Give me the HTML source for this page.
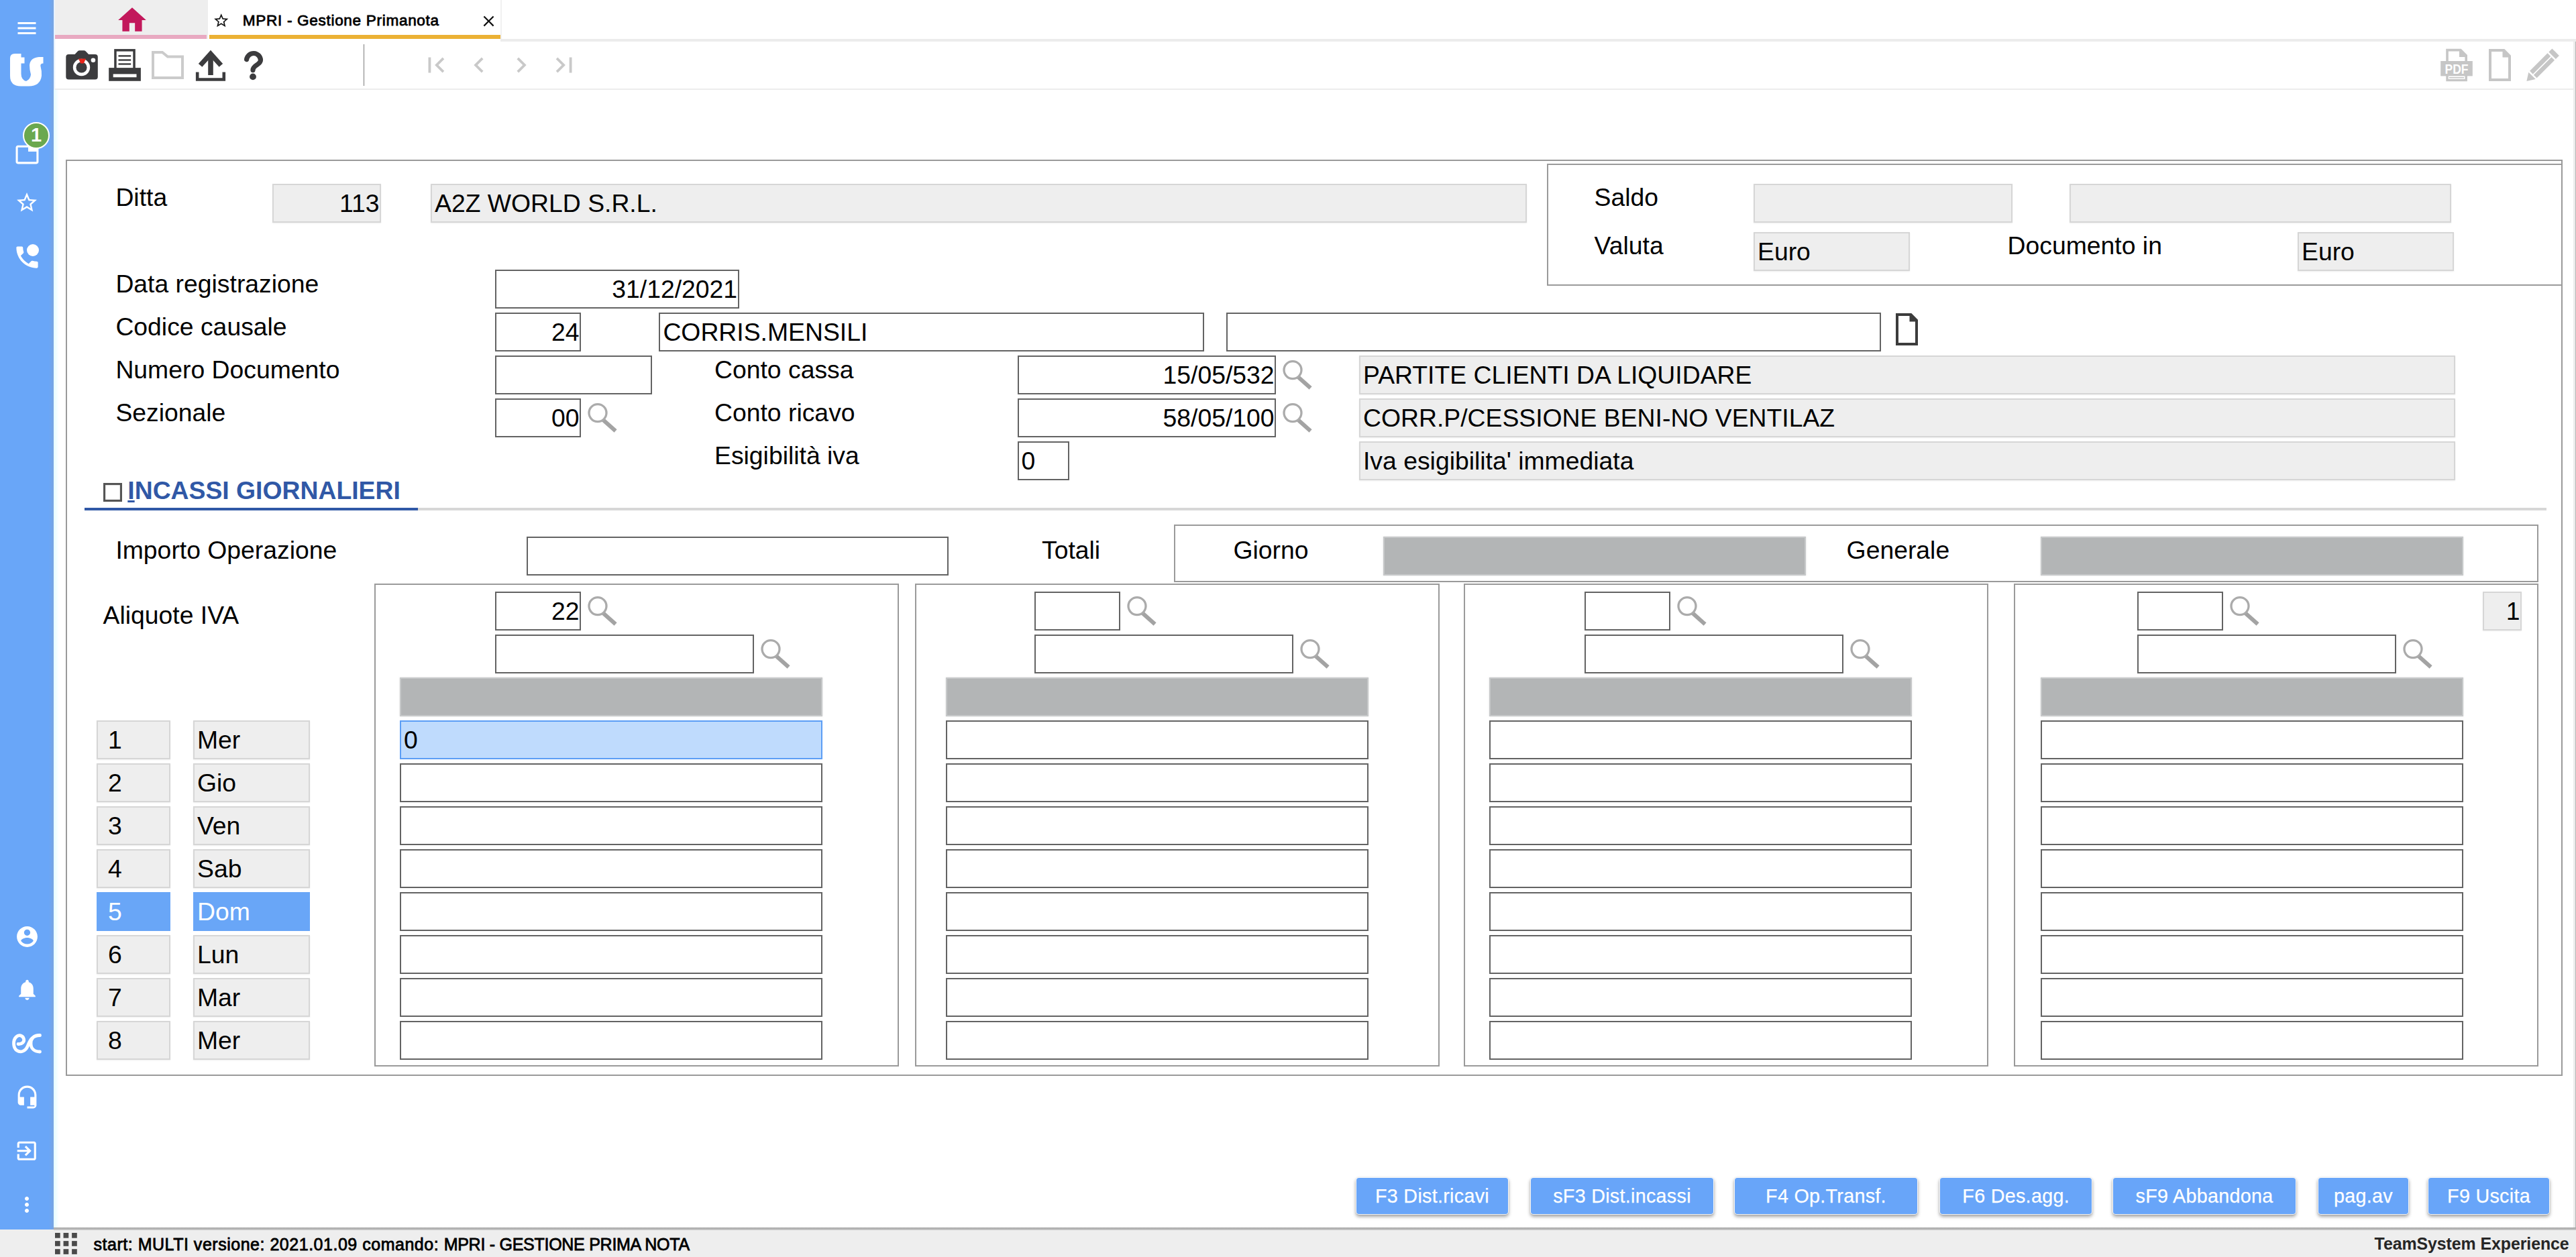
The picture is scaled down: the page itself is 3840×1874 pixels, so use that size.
<!DOCTYPE html><html><head><meta charset="utf-8"><title>MPRI - Gestione Primanota</title><style>
*{box-sizing:border-box;margin:0;padding:0}
html,body{width:3840px;height:1874px;overflow:hidden;background:#fff}
body{position:relative;font-family:"Liberation Sans",sans-serif;color:#000;font-size:37.35px}
.a{position:absolute}
.lb{position:absolute;white-space:nowrap;line-height:42px;height:42px;font-size:37.35px}
.in{position:absolute;background:#fff;border:2px solid #636363;white-space:nowrap;overflow:hidden;font-size:37.35px;padding:0 0.4px 0 4px}
.ro{position:absolute;background:#eee;border:2px solid #d6d6d6;box-shadow:0 1px 2px rgba(0,0,0,.07);white-space:nowrap;overflow:hidden;font-size:37.35px;padding:0 0.4px 0 4px}
.gr{position:absolute;background:#b3b5b6;border:2px solid #c6c8c9;box-shadow:0 0 2px rgba(179,181,182,.5)}
.r{text-align:right}
.bx{position:absolute;border:2px solid #9a9a9a;background:transparent}
.btn{position:absolute;background:#68a5f9;color:#fff;font-size:28.7px;letter-spacing:0.3px;text-align:center;border-radius:4px;white-space:nowrap;-webkit-text-stroke:0.25px #fff;box-shadow:0 0 0 1px rgba(255,255,255,.85),0 3px 5px 1px rgba(0,0,0,.36),0 0 3px rgba(0,0,0,.15)}
.sel{background:#69a6f7;border-color:#69a6f7;color:#fff;box-shadow:none}
svg{position:absolute;overflow:visible}
</style></head><body>
<div class="a" style="left:80px;top:134px;width:8px;height:1697px;background:linear-gradient(to right,#e4fcff,#fff)"></div>
<div class="a" style="left:80px;top:0;width:3px;height:134px;background:linear-gradient(to right,#d8eaff,#fff)"></div>
<div class="a" style="left:0;top:0;width:80px;height:1834px;background:linear-gradient(to right,#69a6f8 0,#69a6f8 73px,#79a5e0 80px)"></div>
<svg style="left:22.0px;top:24.0px" width="36" height="36" viewBox="0 0 24 24"><path fill="#fff" d="M3 18h18v-2H3v2zm0-5h18v-2H3v2zm0-7v2h18V6H3z"/></svg>
<svg style="left:0;top:0" width="80" height="140" viewBox="0 0 80 140"><path fill="#fff" d="M15 87 Q15 80 22 80 L31.5 80 L31.5 85.5 L36.5 85.5 L36.5 94.5 L31.5 94.5 L31.5 110 Q31.5 119 39 121 Q45.5 118 46 111 Q44 104 44 97 Q45 86 58 85 L64.5 85 L64.5 94.5 Q59.5 94.5 60.5 99 Q62.5 106 62 113 Q60 128.5 43 128.5 L31 128.5 Q15 128.5 15 113 Z"/></svg>
<svg style="left:21.5px;top:211.5px" width="37" height="37" viewBox="0 0 24 24"><path fill="#fff" d="M21 3H3c-1.1 0-2 .9-2 2v14c0 1.1.9 2 2 2h18c1.1 0 2-.9 2-2V5c0-1.1-.9-2-2-2zm0 16H3V5h10v4h8v10z"/></svg>
<div class="a" style="left:34px;top:182px;width:40px;height:40px;border-radius:50%;background:#6aa84f;border:2.5px solid #fff;color:#fff;font-weight:bold;font-size:29px;line-height:35px;text-align:center">1</div>
<svg style="left:22.0px;top:284.4px" width="36" height="36" viewBox="0 0 24 24"><path fill="#fff" d="M22 9.24l-7.19-.62L12 2 9.19 8.63 2 9.24l5.46 4.73L5.82 21 12 17.27 18.18 21l-1.63-7.03L22 9.24zM12 15.4l-3.76 2.27 1-4.28-3.32-2.88 4.38-.38L12 6.1l1.71 4.04 4.38.38-3.32 2.88 1 4.28L12 15.4z"/></svg>
<svg style="left:18.6px;top:362.1px" width="43" height="43" viewBox="0 0 24 24"><path fill="#fff" d="M6.62 10.79c1.44 2.83 3.76 5.14 6.59 6.59l2.2-2.2c.27-.27.67-.36 1.02-.24 1.12.37 2.33.57 3.57.57.55 0 1 .45 1 1V20c0 .55-.45 1-1 1-9.39 0-17-7.61-17-17 0-.55.45-1 1-1h3.5c.55 0 1 .45 1 1 0 1.25.2 2.45.57 3.57.11.35.03.74-.25 1.02l-2.2 2.2z"/></svg>
<div class="a" style="left:39.8px;top:363.8px;width:18.4px;height:18.4px;border-radius:50%;background:#fff"></div>
<svg style="left:21.5px;top:1377.5px" width="37" height="37" viewBox="0 0 24 24"><path fill="#fff" d="M12 2C6.48 2 2 6.48 2 12s4.48 10 10 10 10-4.48 10-10S17.52 2 12 2zm0 3c1.66 0 3 1.34 3 3s-1.34 3-3 3-3-1.34-3-3 1.34-3 3-3zm0 14.2c-2.5 0-4.71-1.28-6-3.22.03-1.99 4-3.08 6-3.08 1.99 0 5.97 1.09 6 3.08-1.29 1.94-3.5 3.22-6 3.22z"/></svg>
<svg style="left:21.5px;top:1457.4px" width="37" height="37" viewBox="0 0 24 24"><path fill="#fff" d="M12 22c1.1 0 2-.9 2-2h-4c0 1.1.89 2 2 2zm6-6v-5c0-3.07-1.64-5.64-4.5-6.32V4c0-.83-.67-1.5-1.5-1.5s-1.5.67-1.5 1.5v.68C7.63 5.36 6 7.92 6 11v5l-2 2v1h16v-1l-2-2z"/></svg>
<svg style="left:0;top:1520px" width="80" height="70" viewBox="0 1520 80 70"><path fill="none" stroke="#fff" stroke-width="4.8" stroke-linecap="round" d="M27 1556.5 C33 1557 36.5 1553 35.5 1549 C34 1543.5 28 1542 24 1546 C19 1551 19.5 1562 25 1566 C31 1570 38 1567 41 1560 C44 1553 47 1543.5 59.5 1543.5 M59.5 1543.5 C50 1543 46 1549 46 1555.5 C46 1563 51 1568 59.5 1568"/></svg>
<svg style="left:21.5px;top:1617.4px" width="37" height="37" viewBox="0 0 24 24"><path fill="#fff" d="M12 1c-4.97 0-9 4.03-9 9v7c0 1.66 1.34 3 3 3h3v-8H5v-2c0-3.87 3.13-7 7-7s7 3.13 7 7v2h-4v8h4v1h-7v2h6c1.66 0 3-1.34 3-3V10c0-4.97-4.03-9-9-9z"/></svg>
<svg style="left:21.2px;top:1697.2px" width="37.5" height="37.5" viewBox="0 0 24 24"><path fill="#fff" d="M10.09 15.59L11.5 17l5-5-5-5-1.41 1.41L12.67 11H3v2h9.67l-2.58 2.59zM19 3H5c-1.11 0-2 .9-2 2v4h2V5h14v14H5v-4H3v4c0 1.1.89 2 2 2h14c1.1 0 2-.9 2-2V5c0-1.1-.9-2-2-2z"/></svg>
<svg style="left:22.0px;top:1778.2px" width="36" height="36" viewBox="0 0 24 24"><path fill="#fff" d="M12 8c1.1 0 2-.9 2-2s-.9-2-2-2-2 .9-2 2 .9 2 2 2zm0 2c-1.1 0-2 .9-2 2s.9 2 2 2 2-.9 2-2-.9-2-2-2zm0 6c-1.1 0-2 .9-2 2s.9 2 2 2 2-.9 2-2-.9-2-2-2z"/></svg>
<div class="a" style="left:82px;top:0;width:228px;height:58px;background:#eee"></div>
<div class="a" style="left:82px;top:52px;width:226px;height:6px;background:#e8a9c1"></div>
<svg style="left:171.6px;top:4.7px" width="50" height="50" viewBox="0 0 24 24"><path fill="#c2185b" d="M10 20v-6h4v6h5v-8h3L12 3 2 12h3v8z"/></svg>
<div class="a" style="left:746px;top:58px;width:3094px;height:4px;background:#ececec"></div>
<div class="a" style="left:746px;top:0;width:2px;height:58px;background:#f1f1f1"></div>
<div class="a" style="left:312px;top:52px;width:434px;height:6px;background:#ebb134"></div>
<svg style="left:317.3px;top:17.6px" width="25.5" height="25.5" viewBox="0 0 24 24"><path fill="#111" d="M22 9.24l-7.19-.62L12 2 9.19 8.63 2 9.24l5.46 4.73L5.82 21 12 17.27 18.18 21l-1.63-7.03L22 9.24zM12 15.4l-3.76 2.27 1-4.28-3.32-2.88 4.38-.38L12 6.1l1.71 4.04 4.38.38-3.32 2.88 1 4.28L12 15.4z"/></svg>
<div class="a" style="left:361.8px;top:12.9px;font-size:22.6px;line-height:36px;white-space:nowrap;letter-spacing:0.67px;color:#000;-webkit-text-stroke:0.8px #000">MPRI - Gestione Primanota</div>
<svg style="left:715.0px;top:18.0px" width="27" height="27" viewBox="0 0 24 24"><path fill="#111" d="M19 6.41L17.59 5 12 10.59 6.41 5 5 6.41 10.59 12 5 17.59 6.41 19 12 13.41 17.59 19 19 17.59 13.41 12z"/></svg>
<div class="a" style="left:82px;top:132px;width:3758px;height:2px;background:#ececec"></div>
<div class="a" style="left:3836px;top:62px;width:3px;height:1770px;background:#ececec"></div>
<div class="a" style="left:3838.5px;top:62px;width:1.5px;height:1770px;background:#b5b5b5"></div>
<div class="a" style="left:542px;top:66px;width:1px;height:62px;background:#7c7c7c"></div>
<svg style="left:98px;top:74px" width="48" height="45" viewBox="0 0 48 45"><path fill="#3c3c3e" d="M4.3 7.1 H13.5 L18 2.3 Q19 1.3 20.5 1.3 H27.1 Q28.6 1.3 29.6 2.3 L34.1 7.1 H43.8 Q47.8 7.1 47.8 11.1 V40.5 Q47.8 44.5 43.8 44.5 H4.3 Q0.3 44.5 0.3 40.5 V11.1 Q0.3 7.1 4.3 7.1 Z"/><circle cx="23.5" cy="26.5" r="10.4" fill="none" stroke="#fff" stroke-width="4.6"/><path d="M19 13.4 L30 13.4 L26.8 20.6 L22.2 20.6 Z" fill="#e8261b"/><circle cx="40.9" cy="15.7" r="3.3" fill="#fff"/></svg>
<svg style="left:162px;top:73px" width="48" height="48" viewBox="0 0 48 48"><rect x="0.2" y="28.1" width="47.7" height="19.7" fill="#3c3c3e"/><rect x="9.95" y="1.85" width="28.1" height="28" fill="#fff" stroke="#3c3c3e" stroke-width="3.5"/><rect x="14.5" y="9.2" width="18.7" height="2.4" fill="#3c3c3e"/><rect x="14.5" y="15.3" width="18.7" height="2.4" fill="#3c3c3e"/><rect x="14.5" y="21.3" width="18.7" height="2.4" fill="#3c3c3e"/><rect x="6.7" y="37.4" width="34.8" height="4.8" fill="#fff"/></svg>
<svg style="left:226px;top:76px" width="48" height="42" viewBox="0 0 48 42"><path fill="none" stroke="#cbcbcb" stroke-width="4" stroke-linejoin="miter" d="M2 2 H16 L24 8.5 H46 V40 H2 Z"/></svg>
<svg style="left:291px;top:74px" width="46" height="47" viewBox="0 0 46 47"><path fill="none" stroke="#3c3c3e" stroke-width="4.6" d="M3.2 33.5 V44.5 H42.8 V33.5"/><path fill="none" stroke="#3c3c3e" stroke-width="7.6" d="M23 38 V6"/><path fill="none" stroke="#3c3c3e" stroke-width="7.4" stroke-linejoin="miter" d="M7.6 23.4 L23 6.2 L38.4 23.4"/></svg>
<svg style="left:361px;top:72px" width="34" height="50" viewBox="0 0 34 50"><path fill="none" stroke="#3c3c3e" stroke-width="7.2" stroke-linecap="round" d="M6.6 16.6 A10.5 10.5 0 0 1 27.5 17.6 C27.5 25 16 24.5 16 32.6"/><circle cx="16" cy="42.4" r="4.9" fill="#3c3c3e"/></svg>
<svg style="left:626.5px;top:73.9px" width="46" height="46" viewBox="0 0 24 24"><path fill="#c9c9c9" d="M18.41 16.59L13.82 12l4.59-4.59L17 6l-6 6 6 6zM6 6h2v12H6z"/></svg>
<svg style="left:691.2px;top:73.9px" width="46" height="46" viewBox="0 0 24 24"><path fill="#c9c9c9" d="M15.41 7.41L14 6l-6 6 6 6 1.41-1.41L10.83 12z"/></svg>
<svg style="left:754.4px;top:73.9px" width="46" height="46" viewBox="0 0 24 24"><path fill="#c9c9c9" d="M10 6L8.59 7.41 13.17 12l-4.58 4.59L10 18l6-6z"/></svg>
<svg style="left:818.1px;top:73.9px" width="46" height="46" viewBox="0 0 24 24"><path fill="#c9c9c9" d="M5.59 7.41L10.18 12l-4.59 4.59L7 18l6-6-6-6zM16 6h2v12h-2z"/></svg>
<svg style="left:3638px;top:72px" width="48" height="50" viewBox="0 0 48 50"><path fill="none" stroke="#c6c6c6" stroke-width="3.6" d="M10 20 V2.6 H30 L38.2 10.8 V20"/><path fill="#c6c6c6" d="M28 2 L39 13 H28 Z"/><rect x="0.2" y="19" width="47.6" height="22.4" fill="#c6c6c6"/><path fill="none" stroke="#c6c6c6" stroke-width="3.4" d="M10 41 V47.6 H38.2 V41"/><rect x="13" y="43" width="22" height="1.6" fill="#c6c6c6"/><text x="24" y="38.2" font-family="Liberation Sans" font-weight="bold" font-size="19.5" text-anchor="middle" fill="#fff" textLength="35" lengthAdjust="spacingAndGlyphs">PDF</text></svg>
<svg style="left:3709.6px;top:72.9px" width="33" height="48" viewBox="0 0 33 48"><path fill="none" stroke="#c6c6c6" stroke-width="4" stroke-linejoin="miter" d="M2 2 H22.5 L31 10.5 V46 H2 Z"/><path fill="#c6c6c6" d="M20.5 1 L32 12.5 H20.5 Z"/></svg>
<svg style="left:3765px;top:72px" width="50" height="50" viewBox="0 0 50 50"><g transform="translate(1.4,49.0) rotate(-45)" fill="#c6c6c6"><path d="M0 0 L11.5 -7.4 V7.4 Z"/><rect x="14" y="-7.4" width="37.5" height="6.6"/><rect x="14" y="0.8" width="37.5" height="6.6"/><rect x="54" y="-7.4" width="7.2" height="14.8"/></g></svg>
<div class="bx" style="left:98px;top:238px;width:3722px;height:1366px"></div>
<div class="bx" style="left:2306px;top:244px;width:1514px;height:182px"></div>
<div class="lb" style="left:172.4px;top:273.1px;">Ditta</div>
<div class="ro r" style="left:406.0px;top:274.0px;width:162.0px;height:58.0px;line-height:54.0px;">113</div>
<div class="ro" style="left:642.0px;top:274.0px;width:1633.5px;height:58.0px;line-height:54.0px;">A2Z WORLD S.R.L.</div>
<div class="lb" style="left:2376.6px;top:273.1px;">Saldo</div>
<div class="ro" style="left:2614.0px;top:274.0px;width:385.5px;height:58.0px;line-height:54.0px;"></div>
<div class="ro" style="left:3085.0px;top:274.0px;width:568.5px;height:58.0px;line-height:54.0px;"></div>
<div class="lb" style="left:2376.6px;top:345.3px;">Valuta</div>
<div class="ro" style="left:2614.0px;top:346.0px;width:233.0px;height:58.0px;line-height:54.0px;">Euro</div>
<div class="lb" style="left:2992.6px;top:345.3px;">Documento in</div>
<div class="ro" style="left:3425.0px;top:346.0px;width:232.5px;height:58.0px;line-height:54.0px;">Euro</div>
<div class="lb" style="left:172.4px;top:401.7px;">Data registrazione</div>
<div class="lb" style="left:172.4px;top:465.7px;">Codice causale</div>
<div class="lb" style="left:172.4px;top:529.7px;">Numero Documento</div>
<div class="lb" style="left:172.4px;top:593.7px;">Sezionale</div>
<div class="in r" style="left:738.0px;top:402.0px;width:363.5px;height:58.0px;line-height:54.0px;">31/12/2021</div>
<div class="in r" style="left:738.0px;top:466.0px;width:128.0px;height:58.0px;line-height:54.0px;">24</div>
<div class="in" style="left:982.4px;top:466.0px;width:813.1px;height:58.0px;line-height:54.0px;">CORRIS.MENSILI</div>
<div class="in" style="left:1828.4px;top:466.0px;width:975.6px;height:58.0px;line-height:54.0px;"></div>
<svg style="left:2825.6px;top:467.0px" width="33" height="48" viewBox="0 0 33 48"><path fill="none" stroke="#3c3c3c" stroke-width="4" stroke-linejoin="miter" d="M2 2 H22.5 L31 10.5 V46 H2 Z"/><path fill="#3c3c3c" d="M20.5 1 L32 12.5 H20.5 Z"/></svg>
<div class="in" style="left:738.0px;top:530.0px;width:233.8px;height:58.0px;line-height:54.0px;"></div>
<div class="in r" style="left:738.0px;top:594.0px;width:128.0px;height:58.0px;line-height:54.0px;">00</div>
<svg style="left:875.8px;top:601.0px" width="46" height="45" viewBox="0 0 46 45"><line x1="22.5" y1="24.5" x2="41.6" y2="41.6" stroke="#a3a3a3" stroke-width="6"/><circle cx="15" cy="14.6" r="13" fill="none" stroke="#ababab" stroke-width="3.3"/></svg>
<div class="lb" style="left:1065.0px;top:529.7px;">Conto cassa</div>
<div class="lb" style="left:1065.0px;top:593.7px;">Conto ricavo</div>
<div class="lb" style="left:1065.0px;top:657.7px;">Esigibilit&agrave; iva</div>
<div class="in r" style="left:1516.5px;top:530.0px;width:385.5px;height:58.0px;line-height:54.0px;">15/05/532</div>
<div class="in r" style="left:1516.5px;top:594.0px;width:385.5px;height:58.0px;line-height:54.0px;">58/05/100</div>
<div class="in" style="left:1516.5px;top:658.0px;width:77.3px;height:58.0px;line-height:54.0px;">0</div>
<svg style="left:1911.8px;top:537.0px" width="46" height="45" viewBox="0 0 46 45"><line x1="22.5" y1="24.5" x2="41.6" y2="41.6" stroke="#a3a3a3" stroke-width="6"/><circle cx="15" cy="14.6" r="13" fill="none" stroke="#ababab" stroke-width="3.3"/></svg>
<svg style="left:1911.8px;top:601.0px" width="46" height="45" viewBox="0 0 46 45"><line x1="22.5" y1="24.5" x2="41.6" y2="41.6" stroke="#a3a3a3" stroke-width="6"/><circle cx="15" cy="14.6" r="13" fill="none" stroke="#ababab" stroke-width="3.3"/></svg>
<div class="ro" style="left:2026.0px;top:530.0px;width:1633.5px;height:58.0px;line-height:54.0px;">PARTITE CLIENTI DA LIQUIDARE</div>
<div class="ro" style="left:2026.0px;top:594.0px;width:1633.5px;height:58.0px;line-height:54.0px;">CORR.P/CESSIONE BENI-NO VENTILAZ</div>
<div class="ro" style="left:2026.0px;top:658.0px;width:1633.5px;height:58.0px;line-height:54.0px;">Iva esigibilita' immediata</div>
<div class="a" style="left:154px;top:720px;width:28px;height:28px;border:3.5px solid #555;background:#fff;box-shadow:inset 0 0 2px rgba(0,0,0,.35)"></div>
<div class="lb" style="left:190.3px;top:709.6px;font-weight:bold;color:#3058a6"><span style="text-decoration:underline;text-decoration-thickness:3px;text-underline-offset:2px">I</span>NCASSI GIORNALIERI</div>
<div class="a" style="left:622px;top:757px;width:3174px;height:4px;background:#d7d7d7"></div>
<div class="a" style="left:126px;top:757px;width:497px;height:4px;background:#3058a6"></div>
<div class="lb" style="left:172.4px;top:799.4px;">Importo Operazione</div>
<div class="in" style="left:784.5px;top:800.0px;width:629.5px;height:58.0px;line-height:54.0px;"></div>
<div class="lb" style="left:1553.0px;top:799.4px;">Totali</div>
<div class="bx" style="left:1750px;top:782px;width:2034px;height:86px"></div>
<div class="lb" style="left:1838.4px;top:799.4px;">Giorno</div>
<div class="gr" style="left:2062px;top:800px;width:630px;height:58px"></div>
<div class="lb" style="left:2752.6px;top:799.4px;">Generale</div>
<div class="gr" style="left:3042px;top:800px;width:630px;height:58px"></div>
<div class="lb" style="left:153.6px;top:895.9px;">Aliquote IVA</div>
<div class="bx" style="left:558px;top:870px;width:782px;height:720px"></div>
<div class="in r" style="left:738.0px;top:882.0px;width:128.0px;height:58.0px;line-height:54.0px;">22</div>
<svg style="left:875.9px;top:889.0px" width="46" height="45" viewBox="0 0 46 45"><line x1="22.5" y1="24.5" x2="41.6" y2="41.6" stroke="#a3a3a3" stroke-width="6"/><circle cx="15" cy="14.6" r="13" fill="none" stroke="#ababab" stroke-width="3.3"/></svg>
<div class="in" style="left:738.0px;top:946.0px;width:386.0px;height:58.0px;line-height:54.0px;"></div>
<svg style="left:1133.9px;top:953.0px" width="46" height="45" viewBox="0 0 46 45"><line x1="22.5" y1="24.5" x2="41.6" y2="41.6" stroke="#a3a3a3" stroke-width="6"/><circle cx="15" cy="14.6" r="13" fill="none" stroke="#ababab" stroke-width="3.3"/></svg>
<div class="gr" style="left:596px;top:1010px;width:630px;height:58px"></div>
<div class="in" style="left:596.0px;top:1074.0px;width:630.0px;height:58.0px;line-height:54.0px;background:#bfdbfd;border-color:#5c9ef5">0</div>
<div class="in" style="left:596.0px;top:1138.0px;width:630.0px;height:58.0px;line-height:54.0px;"></div>
<div class="in" style="left:596.0px;top:1202.0px;width:630.0px;height:58.0px;line-height:54.0px;"></div>
<div class="in" style="left:596.0px;top:1266.0px;width:630.0px;height:58.0px;line-height:54.0px;"></div>
<div class="in" style="left:596.0px;top:1330.0px;width:630.0px;height:58.0px;line-height:54.0px;"></div>
<div class="in" style="left:596.0px;top:1394.0px;width:630.0px;height:58.0px;line-height:54.0px;"></div>
<div class="in" style="left:596.0px;top:1458.0px;width:630.0px;height:58.0px;line-height:54.0px;"></div>
<div class="in" style="left:596.0px;top:1522.0px;width:630.0px;height:58.0px;line-height:54.0px;"></div>
<div class="bx" style="left:1364px;top:870px;width:782px;height:720px"></div>
<div class="in r" style="left:1542.0px;top:882.0px;width:128.0px;height:58.0px;line-height:54.0px;"></div>
<svg style="left:1679.9px;top:889.0px" width="46" height="45" viewBox="0 0 46 45"><line x1="22.5" y1="24.5" x2="41.6" y2="41.6" stroke="#a3a3a3" stroke-width="6"/><circle cx="15" cy="14.6" r="13" fill="none" stroke="#ababab" stroke-width="3.3"/></svg>
<div class="in" style="left:1542.0px;top:946.0px;width:386.0px;height:58.0px;line-height:54.0px;"></div>
<svg style="left:1937.9px;top:953.0px" width="46" height="45" viewBox="0 0 46 45"><line x1="22.5" y1="24.5" x2="41.6" y2="41.6" stroke="#a3a3a3" stroke-width="6"/><circle cx="15" cy="14.6" r="13" fill="none" stroke="#ababab" stroke-width="3.3"/></svg>
<div class="gr" style="left:1410px;top:1010px;width:630px;height:58px"></div>
<div class="in" style="left:1410.0px;top:1074.0px;width:630.0px;height:58.0px;line-height:54.0px;"></div>
<div class="in" style="left:1410.0px;top:1138.0px;width:630.0px;height:58.0px;line-height:54.0px;"></div>
<div class="in" style="left:1410.0px;top:1202.0px;width:630.0px;height:58.0px;line-height:54.0px;"></div>
<div class="in" style="left:1410.0px;top:1266.0px;width:630.0px;height:58.0px;line-height:54.0px;"></div>
<div class="in" style="left:1410.0px;top:1330.0px;width:630.0px;height:58.0px;line-height:54.0px;"></div>
<div class="in" style="left:1410.0px;top:1394.0px;width:630.0px;height:58.0px;line-height:54.0px;"></div>
<div class="in" style="left:1410.0px;top:1458.0px;width:630.0px;height:58.0px;line-height:54.0px;"></div>
<div class="in" style="left:1410.0px;top:1522.0px;width:630.0px;height:58.0px;line-height:54.0px;"></div>
<div class="bx" style="left:2182px;top:870px;width:782px;height:720px"></div>
<div class="in r" style="left:2362.0px;top:882.0px;width:128.0px;height:58.0px;line-height:54.0px;"></div>
<svg style="left:2499.9px;top:889.0px" width="46" height="45" viewBox="0 0 46 45"><line x1="22.5" y1="24.5" x2="41.6" y2="41.6" stroke="#a3a3a3" stroke-width="6"/><circle cx="15" cy="14.6" r="13" fill="none" stroke="#ababab" stroke-width="3.3"/></svg>
<div class="in" style="left:2362.0px;top:946.0px;width:386.0px;height:58.0px;line-height:54.0px;"></div>
<svg style="left:2757.9px;top:953.0px" width="46" height="45" viewBox="0 0 46 45"><line x1="22.5" y1="24.5" x2="41.6" y2="41.6" stroke="#a3a3a3" stroke-width="6"/><circle cx="15" cy="14.6" r="13" fill="none" stroke="#ababab" stroke-width="3.3"/></svg>
<div class="gr" style="left:2220px;top:1010px;width:630px;height:58px"></div>
<div class="in" style="left:2220.0px;top:1074.0px;width:630.0px;height:58.0px;line-height:54.0px;"></div>
<div class="in" style="left:2220.0px;top:1138.0px;width:630.0px;height:58.0px;line-height:54.0px;"></div>
<div class="in" style="left:2220.0px;top:1202.0px;width:630.0px;height:58.0px;line-height:54.0px;"></div>
<div class="in" style="left:2220.0px;top:1266.0px;width:630.0px;height:58.0px;line-height:54.0px;"></div>
<div class="in" style="left:2220.0px;top:1330.0px;width:630.0px;height:58.0px;line-height:54.0px;"></div>
<div class="in" style="left:2220.0px;top:1394.0px;width:630.0px;height:58.0px;line-height:54.0px;"></div>
<div class="in" style="left:2220.0px;top:1458.0px;width:630.0px;height:58.0px;line-height:54.0px;"></div>
<div class="in" style="left:2220.0px;top:1522.0px;width:630.0px;height:58.0px;line-height:54.0px;"></div>
<div class="bx" style="left:3002px;top:870px;width:782px;height:720px"></div>
<div class="in r" style="left:3186.0px;top:882.0px;width:128.0px;height:58.0px;line-height:54.0px;"></div>
<svg style="left:3323.9px;top:889.0px" width="46" height="45" viewBox="0 0 46 45"><line x1="22.5" y1="24.5" x2="41.6" y2="41.6" stroke="#a3a3a3" stroke-width="6"/><circle cx="15" cy="14.6" r="13" fill="none" stroke="#ababab" stroke-width="3.3"/></svg>
<div class="in" style="left:3186.0px;top:946.0px;width:386.0px;height:58.0px;line-height:54.0px;"></div>
<svg style="left:3581.9px;top:953.0px" width="46" height="45" viewBox="0 0 46 45"><line x1="22.5" y1="24.5" x2="41.6" y2="41.6" stroke="#a3a3a3" stroke-width="6"/><circle cx="15" cy="14.6" r="13" fill="none" stroke="#ababab" stroke-width="3.3"/></svg>
<div class="gr" style="left:3042px;top:1010px;width:630px;height:58px"></div>
<div class="in" style="left:3042.0px;top:1074.0px;width:630.0px;height:58.0px;line-height:54.0px;"></div>
<div class="in" style="left:3042.0px;top:1138.0px;width:630.0px;height:58.0px;line-height:54.0px;"></div>
<div class="in" style="left:3042.0px;top:1202.0px;width:630.0px;height:58.0px;line-height:54.0px;"></div>
<div class="in" style="left:3042.0px;top:1266.0px;width:630.0px;height:58.0px;line-height:54.0px;"></div>
<div class="in" style="left:3042.0px;top:1330.0px;width:630.0px;height:58.0px;line-height:54.0px;"></div>
<div class="in" style="left:3042.0px;top:1394.0px;width:630.0px;height:58.0px;line-height:54.0px;"></div>
<div class="in" style="left:3042.0px;top:1458.0px;width:630.0px;height:58.0px;line-height:54.0px;"></div>
<div class="in" style="left:3042.0px;top:1522.0px;width:630.0px;height:58.0px;line-height:54.0px;"></div>
<div class="ro r" style="left:3701.0px;top:882.0px;width:58.0px;height:58.0px;line-height:54.0px;">1</div>
<div class="ro" style="left:144.0px;top:1074.0px;width:110.0px;height:58.0px;line-height:54.0px;padding-left:15px">1</div>
<div class="ro" style="left:288.0px;top:1074.0px;width:174.0px;height:58.0px;line-height:54.0px;">Mer</div>
<div class="ro" style="left:144.0px;top:1138.0px;width:110.0px;height:58.0px;line-height:54.0px;padding-left:15px">2</div>
<div class="ro" style="left:288.0px;top:1138.0px;width:174.0px;height:58.0px;line-height:54.0px;">Gio</div>
<div class="ro" style="left:144.0px;top:1202.0px;width:110.0px;height:58.0px;line-height:54.0px;padding-left:15px">3</div>
<div class="ro" style="left:288.0px;top:1202.0px;width:174.0px;height:58.0px;line-height:54.0px;">Ven</div>
<div class="ro" style="left:144.0px;top:1266.0px;width:110.0px;height:58.0px;line-height:54.0px;padding-left:15px">4</div>
<div class="ro" style="left:288.0px;top:1266.0px;width:174.0px;height:58.0px;line-height:54.0px;">Sab</div>
<div class="ro sel" style="left:144.0px;top:1330.0px;width:110.0px;height:58.0px;line-height:54.0px;padding-left:15px">5</div>
<div class="ro sel" style="left:288.0px;top:1330.0px;width:174.0px;height:58.0px;line-height:54.0px;">Dom</div>
<div class="ro" style="left:144.0px;top:1394.0px;width:110.0px;height:58.0px;line-height:54.0px;padding-left:15px">6</div>
<div class="ro" style="left:288.0px;top:1394.0px;width:174.0px;height:58.0px;line-height:54.0px;">Lun</div>
<div class="ro" style="left:144.0px;top:1458.0px;width:110.0px;height:58.0px;line-height:54.0px;padding-left:15px">7</div>
<div class="ro" style="left:288.0px;top:1458.0px;width:174.0px;height:58.0px;line-height:54.0px;">Mar</div>
<div class="ro" style="left:144.0px;top:1522.0px;width:110.0px;height:58.0px;line-height:54.0px;padding-left:15px">8</div>
<div class="ro" style="left:288.0px;top:1522.0px;width:174.0px;height:58.0px;line-height:54.0px;">Mer</div>
<div class="btn" style="left:2022px;top:1756px;width:226px;height:54px;line-height:54px">F3 Dist.ricavi</div>
<div class="btn" style="left:2282px;top:1756px;width:272px;height:54px;line-height:54px">sF3 Dist.incassi</div>
<div class="btn" style="left:2586px;top:1756px;width:272px;height:54px;line-height:54px">F4 Op.Transf.</div>
<div class="btn" style="left:2892.3px;top:1756px;width:225.69999999999982px;height:54px;line-height:54px">F6 Des.agg.</div>
<div class="btn" style="left:3150px;top:1756px;width:272px;height:54px;line-height:54px">sF9 Abbandona</div>
<div class="btn" style="left:3456px;top:1756px;width:134px;height:54px;line-height:54px">pag.av</div>
<div class="btn" style="left:3620px;top:1756px;width:180px;height:54px;line-height:54px">F9 Uscita</div>
<div class="a" style="left:0;top:1833px;width:3840px;height:41px;background:#eee"></div>
<div class="a" style="left:80px;top:1830px;width:3760px;height:4px;background:linear-gradient(to bottom,#a2a2a2,#cdcdcd)"></div>
<svg style="left:81.8px;top:1838.3px" width="33" height="32" viewBox="0 0 33 32"><rect x="0.00" y="0.00" width="7.7" height="7.7" fill="#4a4a4a"/><rect x="0.00" y="12.10" width="7.7" height="7.7" fill="#4a4a4a"/><rect x="0.00" y="24.20" width="7.7" height="7.7" fill="#4a4a4a"/><rect x="12.55" y="0.00" width="7.7" height="7.7" fill="#4a4a4a"/><rect x="12.55" y="12.10" width="7.7" height="7.7" fill="#4a4a4a"/><rect x="12.55" y="24.20" width="7.7" height="7.7" fill="#4a4a4a"/><rect x="25.10" y="0.00" width="7.7" height="7.7" fill="#4a4a4a"/><rect x="25.10" y="12.10" width="7.7" height="7.7" fill="#4a4a4a"/><rect x="25.10" y="24.20" width="7.7" height="7.7" fill="#4a4a4a"/></svg>
<div class="a" style="left:139.5px;top:1837.5px;font-size:25px;line-height:34px;white-space:nowrap;letter-spacing:0.52px;color:#000;-webkit-text-stroke:0.8px #000">start: MULTI versione: 2021.01.09 comando: <span style="letter-spacing:-0.27px">MPRI - GESTIONE PRIMA NOTA</span></div>
<div class="a" style="right:10.4px;top:1837.1px;font-size:24.9px;font-weight:bold;line-height:34px;white-space:nowrap;letter-spacing:-0.07px;color:#262626">TeamSystem Experience</div>
</body></html>
